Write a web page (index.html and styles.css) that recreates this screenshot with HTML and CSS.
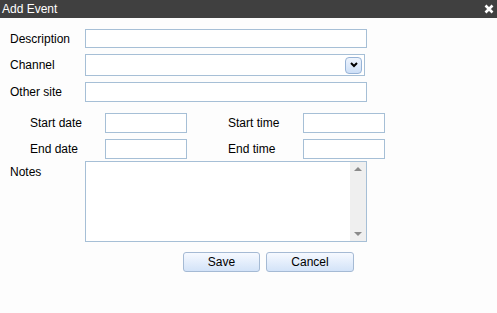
FILE: index.html
```html
<!DOCTYPE html>
<html lang="en">
<head>
    <meta charset="UTF-8">
    <title>Add Event</title>
    <link rel="stylesheet" href="styles.css">
</head>
<body>
    <div class="titlebar">
        <span>Add Event</span>
        <svg class="close" width="10" height="10" viewBox="0 0 10 10">
            <path d="M1.5 1.5 L8.5 8.5 M8.5 1.5 L1.5 8.5" stroke="#fff" stroke-width="2.6"/>
        </svg>
    </div>
    <form class="form">
        <div class="row r-desc">
            <label>Description</label>
            <input type="text" class="wide">
        </div>
        <div class="row r-chan">
            <label>Channel</label>
            <div class="select">
                <span class="drop">
                    <svg width="8" height="6" viewBox="0 0 8 6"><path d="M1 1 L4 4 L7 1" fill="none" stroke="#000" stroke-width="2"/></svg>
                </span>
            </div>
        </div>
        <div class="row r-other">
            <label>Other site</label>
            <input type="text" class="wide tall">
        </div>
        <div class="row sub r-start">
            <label>Start date</label>
            <input type="text" class="short">
            <label class="second">Start time</label>
            <input type="text" class="short">
        </div>
        <div class="row sub r-end">
            <label>End date</label>
            <input type="text" class="short">
            <label class="second">End time</label>
            <input type="text" class="short">
        </div>
        <div class="row top r-notes">
            <label class="notes-label">Notes</label>
            <div class="notes">
                <textarea></textarea>
                <div class="scroll">
                    <span class="up"></span>
                    <span class="down"></span>
                </div>
            </div>
        </div>
        <div class="buttons">
            <button type="button" class="btn save">Save</button>
            <button type="button" class="btn cancel">Cancel</button>
        </div>
    </form>
</body>
</html>
```

FILE: styles.css
```css
body {
    margin: 0;
    background-color: #fdfdfd;
    font-family: "Liberation Sans", Arial, sans-serif;
    font-size: 12px;
    color: #000;
}
.titlebar {
    height: 18px;
    background-color: #404040;
    color: #fff;
    display: flex;
    align-items: center;
    justify-content: space-between;
    padding: 0 3px 0 2px;
    font-size: 12px;
}
.close {
    margin-top: -1px;
}
.form {
    padding-left: 10px;
}
.row {
    display: flex;
    align-items: center;
}
.row label {
    width: 75px;
    flex: none;
}
.row.top {
    align-items: flex-start;
}
.r-desc { margin-top: 11px; }
.r-chan { margin-top: 6px; }
.r-other { margin-top: 6px; }
.r-start { margin-top: 11px; }
.r-end { margin-top: 6px; }
.r-notes { margin-top: 2px; }
.sub {
    padding-left: 20px;
}
.sub label.second {
    margin-left: 41px;
}
input[type="text"] {
    box-sizing: border-box;
    height: 19px;
    margin: 0;
    padding: 0 3px;
    border: 1px solid #a6bfd6;
    background-color: #fff;
    font: inherit;
}
input.wide {
    width: 282px;
}
input.tall {
    height: 20px;
}
input.short {
    width: 82px;
    height: 20px;
}
.select {
    box-sizing: border-box;
    width: 280px;
    height: 22px;
    border: 1px solid #a6bfd6;
    background-color: #fff;
    display: flex;
    justify-content: flex-end;
    align-items: center;
    padding-right: 2px;
}
.drop {
    box-sizing: border-box;
    width: 17px;
    height: 17px;
    border: 1px solid #97b3d6;
    border-radius: 4px;
    background: linear-gradient(#eef4fd, #cddff7);
    display: flex;
    align-items: center;
    justify-content: center;
}
.notes-label {
    margin-top: 4px;
}
.notes {
    box-sizing: border-box;
    width: 282px;
    height: 81px;
    border: 1px solid #a6bfd6;
    background-color: #fff;
    display: flex;
}
.notes textarea {
    flex: 1;
    border: none;
    resize: none;
    outline: none;
    background: transparent;
    margin: 0;
}
.scroll {
    width: 16px;
    background-color: #efefef;
    display: flex;
    flex-direction: column;
    justify-content: space-between;
    align-items: center;
    padding: 5px 0 5px;
}
.up, .down {
    width: 0;
    height: 0;
    border-left: 4px solid transparent;
    border-right: 4px solid transparent;
}
.up {
    border-bottom: 4px solid #8a8a8a;
}
.down {
    border-top: 4px solid #8a8a8a;
}
.buttons {
    display: flex;
    gap: 6px;
    margin-top: 10px;
    padding-left: 173px;
}
.btn {
    box-sizing: border-box;
    height: 20px;
    padding: 0;
    border: 1px solid #a5bad4;
    border-radius: 3px;
    background: linear-gradient(#f6f9ff, #d3e3f8);
    font: inherit;
    color: #000;
}
.save { width: 77px; }
.cancel { width: 88px; }
```
